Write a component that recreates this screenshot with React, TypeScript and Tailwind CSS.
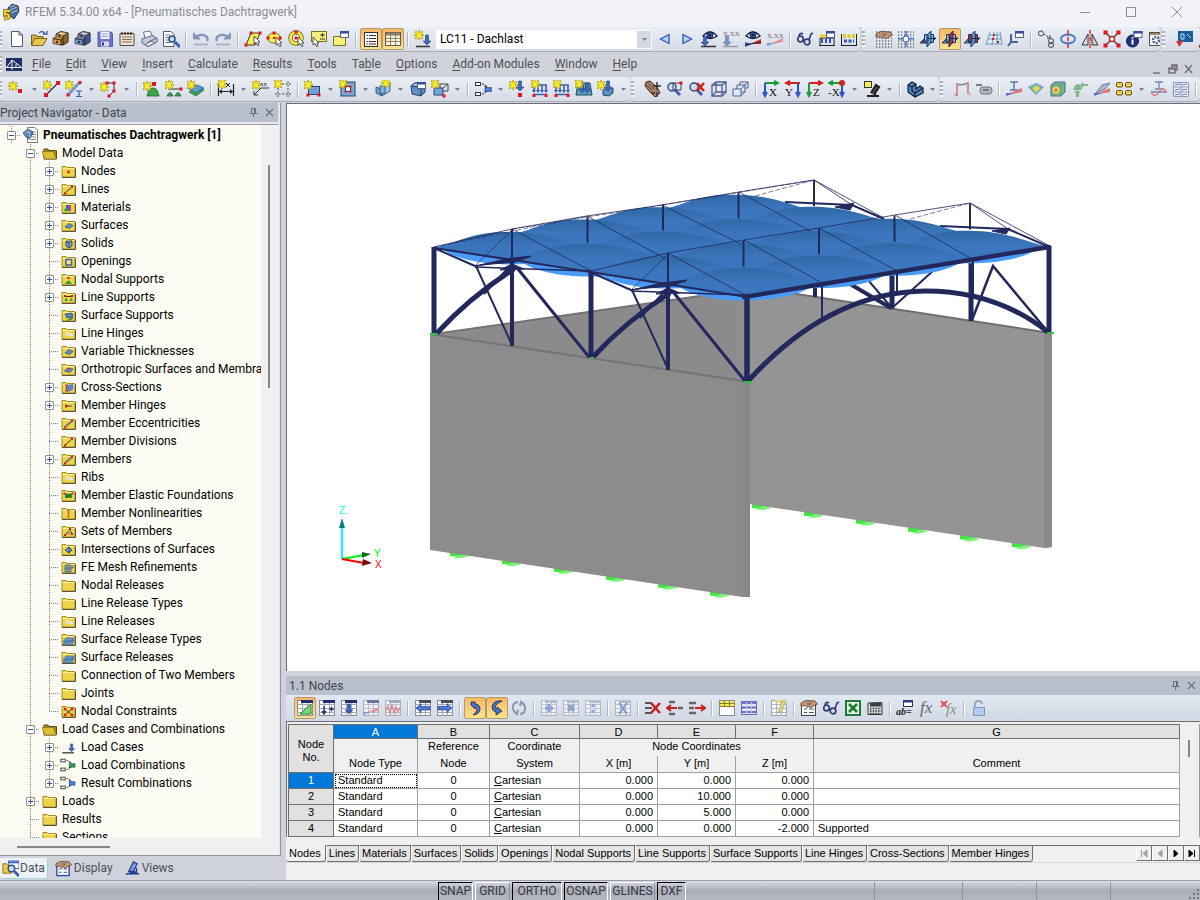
import React from 'react';

const NAVY = '#22285c';

/* ---------- small drawing parts shared by the icons ---------- */

function Star({ x = 4, y = 4 }: { x?: number; y?: number }) {
  return (
    <g transform={`translate(${x} ${y})`} strokeLinecap="round">
      <path d="M0-4V4M-4 0H4M-3-3L3 3M-3 3L3-3" stroke="#a89a18" strokeWidth="2" />
      <path d="M0-3.5V3.5M-3.5 0H3.5M-2.5-2.5L2.5 2.5M-2.5 2.5L2.5-2.5" stroke="#fdf02c" strokeWidth="1.2" />
    </g>
  );
}

function Dot({ x, y, s = 3 }: { x: number; y: number; s?: number }) {
  return <rect x={x - s / 2} y={y - s / 2} width={s} height={s} fill="#e3131f" />;
}

function Cursor({ x, y }: { x: number; y: number }) {
  return <path transform={`translate(${x} ${y})`} d="M0 0V8L2 6.5L3.5 9.5L5 9L3.7 6H6Z" fill="#fff" stroke="#333" strokeWidth=".8" />;
}

function Sheet({ head = '#1f2f70' }: { head?: string }) {
  return (
    <g>
      <rect x="1.5" y="1.5" width="15" height="15" fill="#fff" stroke="#858a96" />
      <path d="M1 5.5H17M1 9.5H17M1 13.5H17M6.5 2V17M11.5 2V17" stroke="#a3a7b2" />
      <rect x="5" y="1" width="12" height="3" fill={head} />
    </g>
  );
}

function Win({ x, y }: { x: number; y: number }) {
  return (
    <g transform={`translate(${x} ${y})`}>
      <rect x=".5" y=".5" width="8" height="6" fill="#fff" stroke="#5b6283" />
      <rect x="0" y="0" width="9" height="2.5" fill="#3c4c9c" />
    </g>
  );
}

function Down({ x, y, c = '#4068b8' }: { x: number; y: number; c?: string }) {
  return <path transform={`translate(${x} ${y})`} d="M-1.5-5H1.5V1H4L0 5L-4 1H-1.5Z" fill={c} stroke="#28437c" strokeWidth=".6" />;
}

function Lens({ x, y, r = 4 }: { x: number; y: number; r?: number }) {
  return (
    <g>
      <path d={`M${x + 3} ${y + 3}L${x + 8} ${y + 8}`} stroke="#3c5fae" strokeWidth="3" />
      <circle cx={x} cy={y} r={r} fill="#c9ddf6" stroke="#324c86" strokeWidth="1.5" />
    </g>
  );
}

function Eye({ x, y }: { x: number; y: number }) {
  return (
    <g transform={`translate(${x} ${y})`}>
      <path d="M-7 1Q0-7 7 1Q0 6-7 1Z" fill="#fff" stroke="#16203f" strokeWidth="1.4" />
      <circle r="3" fill="#35579f" stroke="#10204c" />
      <circle r="1" fill="#05091c" />
    </g>
  );
}

function Drawers({ c, d }: { c: string; d: string }) {
  return (
    <g stroke="#2e2618" strokeWidth=".7">
      <path d="M4 4L9 1.5L16 3V12L11 15L4 13Z" fill={c} />
      <path d="M11 6L16 3V12L11 15Z" fill={d} />
      <path d="M4 4L9 1.500L16 3L11 6Z" fill="#f4ead8" fillOpacity=".5" />
      <path d="M1 8.500L9 10V15L1 13.500ZM1 8.500L4 6.500L11 8L9 10Z" fill={c} />
      <path d="M9 10L11 8V15L9 15Z" fill={d} />
      <circle cx="5" cy="12" r="1" fill="#222" />
      <circle cx="7.500" cy="5.500" r=".8" fill="#222" />
    </g>
  );
}

function Cube({ red = false, mid = false }: { red?: boolean; mid?: boolean }) {
  return (
    <g stroke="#17345e" strokeWidth="1">
      <path d="M1 13L6 8H17L12 13Z" fill={red || mid ? '#8fc1e8' : '#dd2c2c'} />
      <path d="M5.500 4.500H14.500V12.500H5.500Z" fill={mid ? '#d8262b' : '#8fc1e8'} />
      <path d="M8 5L12 1V12L8 17Z" fill={red ? '#d8262b' : '#6ea6d8'} />
      <path d="M3 11H8M8 8.500H17M9 5V12.500" />
    </g>
  );
}

function Loads() {
  return (
    <g>
      <path d="M3 5V12M7 5V12M11 5V12M15 5V12" stroke="#395fb4" strokeWidth="1.6" />
      <path d="M1 10L3 13L5 10ZM5 10L7 13L9 10ZM9 10L11 13L13 10ZM13 10L15 13L17 10Z" fill="#395fb4" />
      <path d="M2 5H16M2 14.5H16" stroke="#395fb4" strokeWidth="1.3" />
      <Dot x={3} y={15.5} />
      <Dot x={15} y={15.5} />
    </g>
  );
}

function Solid() {
  return (
    <g stroke="#1d3557" strokeWidth=".9">
      <path d="M2 6L6 3H16V12L12 16L3 14Z" fill="#5a8ec4" />
      <path d="M2 6L12 7L16 3M12 7V16" fill="none" />
      <path d="M2 6L6 3H16L12 7Z" fill="#a9cdee" />
    </g>
  );
}

function Axes({ a, b, t, m = false }: { a: string; b: string; t: string; m?: boolean }) {
  return (
    <g>
      {m ? (
        <path d="M14 3H2M5 1L1 3L5 5" stroke={a} strokeWidth="2" fill="none" />
      ) : (
        <path d="M3 3H14M12 1L16 3L12 5" stroke={a} strokeWidth="2" fill="none" />
      )}
      <path d={m ? 'M14 3V14M12 12L14 16L16 12' : 'M3 3V14M1 12L3 16L5 12'} stroke={b} strokeWidth="2" fill="none" />
      <text x={m ? 0 : 7} y="16" fontSize="11" fontFamily="Liberation Serif, serif" fill="#111">{t}</text>
    </g>
  );
}

function Comb({ c }: { c: string }) {
  return (
    <g fill="none">
      <rect x="1.5" y="2.5" width="5" height="3" stroke="#333" fill="#fff" />
      <rect x="1.5" y="12.5" width="5" height="3" stroke="#333" fill="#fff" />
      <path d="M8 4Q12 4 12 7M8 14Q12 14 12 11" stroke="#333" strokeDasharray="2 1" />
      <path d="M10 6L12 8L13.5 6ZM10 12L12 10L13.5 12Z" fill="#333" />
      <path d="M11 7.5H17.5V11.5H11Z" fill={c} stroke="#24415c" strokeWidth=".6" />
    </g>
  );
}

function Specs() {
  return (
    <g fill="none" stroke="#2d3f74" strokeWidth="1.7">
      <circle cx="4.5" cy="9" r="2.8" />
      <circle cx="11" cy="12" r="2.8" />
      <path d="M7 9.5L9 10.5M3 6Q4 2 7 4M13 10L15 4L17 3" />
    </g>
  );
}

function Diagram() {
  return (
    <g>
      <path d="M1 15L17 8V12Z" fill="#e27070" />
      <path d="M1 16V13L9 13Z" fill="#5170c4" />
    </g>
  );
}

const Hand = () => (
  <g>
    <path d="M1 4L6 1.500L15 2L17.500 5L13 7L11 9L9 7.500L7 8.500L5.500 6.500L1 7Z" fill="#c49a78" stroke="#4e3728" strokeWidth=".8" />
    <path d="M6 4H12M7 6L11 5" stroke="#7a5a42" strokeWidth=".8" />
  </g>
);

const Grid = () => (
  <path d="M1 2H17M1 5H17M1 8H17M1 11H17M1 14H17M1 17H17" stroke="#333" strokeWidth="1.2" strokeDasharray="1.3 1.7" />
);

/* ---------- toolbar icons, 18 x 18 ---------- */

const ICONS: Record<string, React.ReactNode> = {
  New: <path d="M3.500 1.500H11L14.500 5V16.500H3.500ZM11 1.500V5H14.500" fill="#fff" stroke="#555b68" />,
  Open: (
    <g stroke="#6e5710" strokeWidth=".9">
      <path d="M1.500 15V5H6L7 6.500H13V9" fill="#d9b53a" />
      <path d="M1.500 15.500L4.500 8.500H17L13 15.500Z" fill="#e6c64a" />
      <path d="M9 3Q13 0 15 4M13 4H17V1" fill="none" stroke="#3c5c9c" strokeWidth="1.300" />
    </g>
  ),
  'Open block': <Drawers c="#dca653" d="#8d6426" />,
  'Save block': <Drawers c="#7d9ae0" d="#3c56a4" />,
  Save: (
    <g>
      <path d="M2 2H15L16.500 3.500V16.500H2Z" fill="#6b72c8" stroke="#454c90" strokeWidth=".8" />
      <rect x="4.500" y="2" width="9" height="7" fill="#eef1fb" />
      <path d="M6 4H12M6 6.500H12" stroke="#9aa2c8" />
      <rect x="5" y="11.500" width="8" height="5" fill="#d5d9e6" />
      <rect x="6" y="12.500" width="2" height="3" fill="#30387c" />
    </g>
  ),
  Report: (
    <g>
      <path d="M2 3.500H16V15.500H2Z" fill="#f6e2cd" stroke="#4f4a47" />
      <path d="M4 7H14M4 9.500H14M4 12H14" stroke="#7b6d61" />
      <path d="M3 3.500H15" stroke="#444" strokeWidth="2.500" strokeDasharray="2 1" />
    </g>
  ),
  Print: (
    <g stroke="#474c60" strokeWidth=".8">
      <path d="M5 8L3.500 2L10 1L13 7" fill="#fff" />
      <path d="M2 9L12 5.500L17 8V12L8 16.500L2 13Z" fill="#c3c8dc" />
      <path d="M8 12L16 8.500M5 14.500L12 11L14.500 13L8 16.500Z" fill="#f4f6ff" />
    </g>
  ),
  'Print preview': (
    <g>
      <path d="M1.500 1.500H9L12 4.500V16.500H1.500Z" fill="#fff" stroke="#555b68" />
      <path d="M3.500 5H8M3.500 7.500H7M3.500 10H7M3.500 12.500H8" stroke="#777" />
      <Lens x={10} y={9} r={3} />
    </g>
  ),
  Undo: (
    <g fill="none" stroke="#8496b8">
      <path d="M3 8Q9 2 15 7Q16 9 15 11" strokeWidth="2.500" />
      <path d="M1.500 3V9H8Z" fill="#8496b8" />
      <path d="M2 14.500H16" strokeWidth="2" stroke="#aab4c6" />
    </g>
  ),
  Redo: (
    <g fill="none" stroke="#8496b8">
      <path d="M15 8Q9 2 3 7Q2 9 3 11" strokeWidth="2.500" />
      <path d="M16.500 3V9H10Z" fill="#8496b8" />
      <path d="M2 14.500H16" strokeWidth="2" stroke="#aab4c6" />
    </g>
  ),
  'Select rhomboid': (
    <g>
      <path d="M2 15L7 3H16L11 15Z" fill="#f8ee50" stroke="#333" />
      <Dot x={2} y={15} /><Dot x={7} y={3} /><Dot x={16} y={3} />
      <Cursor x={10} y={6} />
    </g>
  ),
  'Select ellipse': (
    <g>
      <ellipse cx="8" cy="8" rx="6.500" ry="5" fill="#f8ee50" stroke="#7b7020" />
      <Dot x={2} y={8} /><Dot x={14} y={8} /><Dot x={8} y={3} /><Dot x={8} y={8} s={2} />
      <Cursor x={10} y={7} />
    </g>
  ),
  'Select annulus': (
    <g>
      <circle cx="8" cy="8" r="5.500" fill="#fff" stroke="#6b6120" strokeWidth="4.500" />
      <circle cx="8" cy="8" r="5.500" fill="none" stroke="#f5e63e" strokeWidth="3" />
      <Dot x={8} y={8} /><Dot x={8} y={2} />
      <Cursor x={10} y={7} />
    </g>
  ),
  'Select special': (
    <g>
      <rect x="1.500" y="1.500" width="15" height="10" fill="#f8ee7a" stroke="#7b7020" />
      <path d="M10 5H15M12.500 3V7M10 9H15" stroke="#333" />
      <Cursor x={3} y={7} />
    </g>
  ),
  'New selection': (
    <g>
      <path d="M1.500 6.500H13.500V15.500H1.500Z" fill="#f8ee7a" stroke="#7b7020" />
      <Win x={8} y={1} />
    </g>
  ),
  Navigator: (
    <g>
      <rect x="2.500" y="2.500" width="13" height="14" fill="#fff" stroke="#333" />
      <path d="M4.500 5.500H6M7 5.500H14M4.500 8.500H6M7 8.500H14M4.500 11.500H6M7 11.500H14M4.500 14H6M7 14H14" stroke="#333" />
    </g>
  ),
  Tables: (
    <g>
      <rect x="1.500" y="2.500" width="15" height="13" fill="#fdf3df" stroke="#5e594d" />
      <path d="M2 4H16" stroke="#8c7f66" strokeWidth="3" />
      <path d="M2 8.500H16M2 11.500H16M6.500 3V15M11.500 3V15" stroke="#8c8270" />
    </g>
  ),
  'New load case': (
    <g>
      <Star x={5} y={5} />
      <path d="M2 16.500H16" stroke="#333" strokeWidth="1.500" />
      <Down x={13} y={10} />
    </g>
  ),
  Previous: <path d="M13 4.500V13.500L4.500 9Z" fill="#b5d4fb" stroke="#2e56b8" strokeWidth="1.300" />,
  Next: <path d="M5 4.500V13.500L13.500 9Z" fill="#b5d4fb" stroke="#2e56b8" strokeWidth="1.300" />,
  'Show loads': <g><Eye x={10} y={5} /><Down x={5} y={11} /><path d="M1 16.500H16" stroke="#333" strokeWidth="1.500" /></g>,
  'Show load values': (
    <g opacity=".65">
      <text x="1" y="6" fontSize="7" fontFamily="Liberation Serif, serif" fill="#222">X.XX</text>
      <Down x={5} y={11} /><path d="M1 16.500H16" stroke="#777" strokeWidth="1.500" />
    </g>
  ),
  'Show results': <g><Eye x={9} y={5} /><path d="M1 17V12L8 14Z" fill="#3a58c0" /><path d="M17 9V14H6Z" fill="#dc2c30" /><path d="M1 15L17 12" stroke="#222" /></g>,
  'Show result values': (
    <g opacity=".65">
      <text x="1" y="8" fontSize="7" fontFamily="Liberation Serif, serif" fill="#222">X.XX</text>
      <Diagram />
    </g>
  ),
  Glasses: <Specs />,
  'Number dialog': <g><path d="M2 8V15M16 8V15M2 8H16M1 15.500H17" stroke="#222" fill="none" /><path d="M4 8V13M8 8V13M12 8V13" stroke="#3858b8" strokeWidth="2" /><path d="M2 6H8" stroke="#e6cf31" strokeWidth="3" /><Win x={8} y={1} /></g>,
  Numbering: <g><path d="M1.500 4V16M16.500 4V16M1 15.500H17" stroke="#222" /><path d="M3 6H15" stroke="#e0c830" strokeWidth="4" strokeDasharray="3 1.500" /><path d="M4 11H14" stroke="#3858b8" strokeWidth="3" strokeDasharray="3 1.500" /></g>,
  'Grid settings': <g><Grid /><Hand /></g>,
  Snap: <g><Grid /><path d="M9 1V17M1 9H17" stroke="#2f55c0" strokeWidth="1.200" /><circle cx="9" cy="9" r="3" fill="#fff" stroke="#2f55c0" /></g>,
  'Work plane XY': <Cube />,
  'Work plane YZ': <Cube red />,
  'Work plane XZ': <Cube mid />,
  Mesh: <g><path d="M5 2H15L17 15H1Z" fill="#dcebf7" /><path d="M5 2L1 15M9 2L7 15M12 2V15M15 2L17 15M4 5H16M3 9H17M1 14H17" stroke="#6f99bf" /><Dot x={9} y={5} s={2} /><Dot x={8} y={9} s={2} /><Dot x={13} y={12} s={2} /></g>,
  'Coordinate system': <g><path d="M4 4V12H11M4 12L1 16" stroke="#4660a8" strokeWidth="2" fill="none" /><Win x={8} y={1} /></g>,
  Move: <g fill="none" stroke="#444"><circle cx="4" cy="3.500" r="2.500" /><circle cx="14" cy="11" r="2.500" /><circle cx="14" cy="15" r="2.500" /><path d="M7 4L13 8" strokeDasharray="2 1" /><path d="M10 8H13V5" /></g>,
  Rotate: <g fill="none"><ellipse cx="9" cy="9" rx="7" ry="4.500" stroke="#4d82c4" strokeWidth="2" /><path d="M9 0V18" stroke="#d42020" strokeWidth="1.400" strokeDasharray="4 1 1 1" /></g>,
  Mirror: <g fill="none" stroke="#333"><path d="M7 4V15H1Z" /><path d="M11 4V15H17Z" fill="#ccc" /><path d="M9 0V18" stroke="#d42020" strokeWidth="1.400" strokeDasharray="4 1 1 1" /></g>,
  Divide: <g><path d="M2 2L16 16M16 2L2 16" stroke="#333" strokeWidth="1.200" /><circle cx="9" cy="9" r="2.500" fill="#fff" stroke="#d42020" strokeWidth="1.400" /><Dot x={2.500} y={2.500} s={4} /><Dot x={15.500} y={2.500} s={4} /><Dot x={2.500} y={15.500} s={4} /><Dot x={15.500} y={15.500} s={4} /></g>,
  Info: <g><circle cx="7.500" cy="11" r="6" fill="#20307e" stroke="#101a4a" /><path d="M7.500 7V8.500M7.500 9.500V14.500" stroke="#fff" strokeWidth="2" /><Win x={8.500} y={1} /></g>,
  Settings: <g><rect x="2.500" y="2.500" width="14" height="13" fill="#fff" stroke="#4b4f58" /><path d="M3 4H16" stroke="#a08c58" strokeWidth="2" /><circle cx="9" cy="10" r="3" fill="none" stroke="#4a5f96" strokeWidth="2.500" strokeDasharray="2 1" /></g>,
  Background: <g><rect x="3" y="1" width="15" height="11" fill="#1c5c9c" /><path d="M6 4H9V9H6ZM12 4L16 8" stroke="#b5e2f5" fill="none" /><path d="M1 11H8L4.500 17Z" fill="#dc2c30" /></g>,
  Warning: <path d="M2 17L10 2L18 17Z" fill="#e04747" stroke="#8a1414" />,

  Node: <g><Star x={5} y={6} /><Dot x={12} y={11} s={4} /></g>,
  Line: <g><Star x={4} y={5} /><path d="M3 15L15 3" stroke="#333" strokeWidth="1.300" /><Dot x={3} y={15} s={4} /><Dot x={15} y={3} s={4} /></g>,
  Member: <g><path d="M3 15L14 3" stroke="#6f9dd0" strokeWidth="3" /><Star x={4} y={5} /><Dot x={3} y={15} s={3} /><Dot x={15} y={2.500} s={3} /><path d="M11 11H17M11 16.500H17M14 11V16" stroke="#3858a8" strokeWidth="1.200" /></g>,
  Polyline: <g><path d="M6 3H14V11L9 16" fill="none" stroke="#333" /><Star x={4} y={7} /><Dot x={7} y={3} /><Dot x={14} y={3} /><Dot x={14} y={11} /><Dot x={9} y={16} /></g>,
  'Nodal support': <g><path d="M5 13Q6 8 10 8Q14 8 15 13L16 16H4Z" fill="#3fa84c" stroke="#1c5c26" strokeWidth=".8" /><Star x={4} y={6} /><Dot x={11} y={4} s={4} /></g>,
  'Line support': <g><path d="M3 9H16" stroke="#333" /><path d="M2 16Q5 9 8 16ZM10 16Q13 9 16 16Z" fill="#3fa84c" stroke="#1c5c26" strokeWidth=".8" /><Star x={4} y={5} /><Dot x={16} y={9} /></g>,
  'Surface support': <g><path d="M2 12L10 7L17 10L9 16Z" fill="#3fa84c" stroke="#1c5c26" strokeWidth=".7" /><path d="M2 9L10 5L17 8L9 13Z" fill="#5c9bdb" stroke="#274a78" strokeWidth=".7" /><Star x={4} y={5} /></g>,
  Dimension: <g><path d="M1.500 4V16M16.500 4V16M2 11.500H16" stroke="#222" strokeWidth="1.200" /><path d="M2 11.500L5 9V14ZM16 11.500L13 9V14Z" fill="#222" /><Star x={5} y={4} /><path d="M9 3L13 7M13 3L9 7" stroke="#222" /></g>,
  Comment: <g><text x="8" y="6" fontSize="7" fontFamily="Liberation Serif, serif" fill="#222">xx</text><path d="M17 8H9L2 15M2 11V15H6" stroke="#333" fill="none" /><Star x={4} y={5} /></g>,
  'Guide line': <g><path d="M4 1V17M14 1V17M1 4H18M1 14H18" stroke="#444" strokeDasharray="2 1.500" /><Star x={4} y={4} /></g>,
  Surface: <g><rect x="4.500" y="6.500" width="11" height="8" fill="#6fa0d8" stroke="#27456c" /><Star x={4} y={5} /><Dot x={4} y={15} /><Dot x={15} y={15} /></g>,
  Opening: <g><rect x="2" y="2" width="14" height="14" fill="#7fa7d0" stroke="#27456c" /><rect x="6.500" y="6.500" width="5" height="5" fill="#f0f3fa" stroke="#27456c" /><Star x={4} y={4} /><Dot x={6.500} y={6.500} s={2} /><Dot x={11.500} y={6.500} s={2} /><Dot x={6.500} y={11.500} s={2} /><Dot x={11.500} y={11.500} s={2} /></g>,
  Intersection: <g stroke="#27456c" strokeWidth=".8"><path d="M2 7L8 9V16L2 13Z" fill="#6fa0d8" /><path d="M8 9L16 3V11L8 16Z" fill="#9cc3ea" /><path d="M6 6L11 5V13L6 14Z" fill="#7fb0e0" /><Star x={12} y={3} /></g>,
  'Solid dialog': <g><Solid /><Win x={8} y={2} /></g>,
  'New solid': <g><path d="M3 8H12V15H3Z" fill="#74a5da" stroke="#27456c" /><path d="M9 4H17V11H12M9 4V8M12 8L17 4" stroke="#444" fill="none" /><Star x={4} y={4} /><Dot x={13} y={16} /></g>,
  Combination: <Comb c="#3f7fe0" />,
  'Nodal load': <g><Star x={4} y={5} /><Down x={11} y={6} /><Dot x={11} y={15} s={4} /></g>,
  'Member load': <g><Loads /><Star x={4} y={4} /></g>,
  'Line load': <g><Loads /><Star x={4} y={4} /></g>,
  'Surface load': <g><path d="M3 3H15L17 15H1Z" fill="#5d9fc0" stroke="#1c4a62" /><Down x={7} y={8} /><Down x={12} y={8} /><Star x={4} y={4} /></g>,
  'Solid load': <g><path d="M6 10L10 8H16V13L12 16L6 15Z" fill="#5a8ec4" stroke="#1d3557" strokeWidth=".9" /><Star x={4} y={5} /><Down x={11} y={6} /></g>,
  Pan: <g><path d="M2 2L6 1L13 7L16 13L11 17L5 11L1 6Z" fill="#a88266" stroke="#3c2c22" /><path d="M2 5L8 10M4 3L10 9" stroke="#5c4232" /><path d="M13 2V10M9 6H17M13 12V17M7 13H11" stroke="#333" strokeWidth="1.500" /></g>,
  'Zoom window': <g><Lens x={6} y={7} /><path d="M7 3H15V10H7Z" fill="none" stroke="#444" /><Dot x={15} y={3} /></g>,
  'Zoom cancel': <g><Lens x={6} y={7} /><path d="M9 3L16 11M16 3L9 11" stroke="#d02020" strokeWidth="2.500" /></g>,
  Isometric: <g fill="none" stroke="#4f5f94" strokeWidth="1.300"><path d="M2 5H12V16H2ZM6 2H16V12H6ZM2 5L6 2M12 5L16 2M12 16L16 12M2 16L6 12" /></g>,
  'View layers': <g fill="#dfe8f6" stroke="#4f5f94"><path d="M8 2H16V8H8Z" /><path d="M5 5H13V12H5Z" /><path d="M1 9H9V16H1ZM9 9L16 2M9 16L13 12" /></g>,
  'View X': <Axes a="#16a036" b="#2c55cc" t="X" />,
  'View Y': <g><path d="M16 3H3M6 1L2 3L6 5" stroke="#d62020" strokeWidth="2" fill="none" /><path d="M14 3V14M12 12L14 16L16 12" stroke="#2c55cc" strokeWidth="2" fill="none" /><text x="1" y="16" fontSize="11" fontFamily="Liberation Serif, serif" fill="#111">Y</text></g>,
  'View Z': <Axes a="#d62020" b="#16a036" t="Z" />,
  'View -X': <g><Axes a="#16a036" b="#2c55cc" t="-X" m /><circle cx="14" cy="3" r="3" fill="#d62020" /></g>,
  'User view': <g><path d="M4 16H16M8 13L13 5L16 7L12 13V16" stroke="#222" strokeWidth="2.200" fill="#555" /><rect x="1.500" y="1.500" width="7" height="6" fill="#fbee4e" stroke="#333" /></g>,
  Render: <g stroke="#0f1f33" strokeWidth="1.200"><path d="M2 5L6 2L10 4V9L14 6L17 8V13L9 17L2 12Z" fill="#4f83bb" /><path d="M2 5L6 7V11L9 13L17 8M9 13V17M6 7L10 4" fill="none" /></g>,
  'Member results': <g fill="none"><path d="M4 16V4Q9 6 15 3V14" stroke="#888" strokeWidth="1.500" /><path d="M2 16Q6 8 4 4M15 3Q13 9 17 15" stroke="#e29090" strokeWidth="1.400" /></g>,
  Tag: <g><rect x="5" y="7" width="12" height="7" rx="3" fill="#b4b6bf" stroke="#70737f" /><path d="M1 5H7M8 10H14" stroke="#777a85" strokeWidth="2" /></g>,
  'Section results': <g><path d="M5 2H13M9 2V10M5 10H13" stroke="#5d7ba8" strokeWidth="1.500" /><Diagram /></g>,
  'Surface results': <g><path d="M1 7L9 3L17 7L9 15Z" fill="#7f8fe0" /><path d="M3 7L9 4L15 8L9 14Z" fill="#78cc74" /><path d="M6 8L10 6L13 8L9 12Z" fill="#f3d656" /></g>,
  'Solid results': <g><path d="M2 5L6 2H16V12L12 16H2Z" fill="#74b97a" stroke="#476c8c" /><path d="M2 5H12V16M12 5L16 2" stroke="#6a8fc8" /><circle cx="7" cy="10" r="3.500" fill="#f3d656" /><circle cx="7" cy="10" r="1.600" fill="#e06060" /></g>,
  'Support reactions': <g fill="#7fb88a"><path d="M2 10Q4 4 7 4Q10 4 11 10Z" /><path d="M12 4H17V6H12V8L9 5L12 2Z" /><path d="M5 17V13H3L6.500 10L10 13H8V17Z" /></g>,
  'Line results': <g><path d="M3 13L9 5L17 3L12 9Z" fill="#a8b8cf" stroke="#6d7c96" /><Diagram /></g>,
  'Result windows': <g fill="#f4d34c" stroke="#5c4d16"><rect x="1.500" y="2.500" width="6" height="4.500" rx="1" /><rect x="10.500" y="2.500" width="6" height="4.500" rx="1" /><rect x="1.500" y="10.500" width="6" height="4.500" rx="1" /><rect x="10.500" y="10.500" width="6" height="4.500" rx="1" /></g>,
  'Result diagram': <g><path d="M5 2H13M9 2V9M5 9H13M1 12H17" stroke="#7088b0" strokeWidth="1.300" /><path d="M1 12Q5 19 9 12Q13 5 17 13" fill="none" stroke="#e07878" strokeWidth="1.300" /></g>,
  'Result sections': <g><path d="M1.500 2.500H16.500V16.500H1.500ZM9 2V17M2 7H16M2 12H16" fill="#edf1f8" stroke="#8d9bb8" /><path d="M3 5L8 4M10 5L15 4M3 10L8 9M10 10L15 9M3 15L8 14M10 15L15 14" stroke="#6a7ec0" /></g>,

  'Edit graphic': <g><Sheet /><path d="M4 15L15 5V15Z" fill="#7cd67a" stroke="#1e8a2c" /></g>,
  'Insert row': <g><Sheet /><path d="M6 7V14M4 12L6 15L8 12M11 10H16M13.500 7.500V12.500" stroke="#26397c" strokeWidth="1.500" fill="none" /></g>,
  'Move down': <g><Sheet /><Down x={9} y={10} c="#3a62be" /></g>,
  'Table diagram': <g opacity=".6"><Sheet /><Diagram /></g>,
  'Table curve': <g opacity=".6"><Sheet head="#7780b0" /><path d="M2 12L4 7L6 14L8 6L10 14L12 8L14 13L16 8" fill="none" stroke="#dd4c4c" strokeWidth="1.300" /></g>,
  'Table left': <g><Sheet head="#4a4e5c" /><path d="M2 9L7 5V7.500H16V11H7V13.500Z" fill="#4c79d8" stroke="#213e86" strokeWidth=".7" /></g>,
  'Table right': <g><Sheet head="#4a4e5c" /><path d="M16 9L11 5V7.500H2V11H11V13.500Z" fill="#4c79d8" stroke="#213e86" strokeWidth=".7" /></g>,
  'Sync selection': <path d="M5 3H9V5Q14 5 14 10Q14 15 7 16Q11 13 11 10Q10 8 9 8V10L5 6Z" fill="#4d74c4" stroke="#18305c" strokeWidth=".9" />,
  'Sync view': <path d="M14 2Q5 1 4 8Q4 12 8 13V16L14 12L9 8V10Q7 10 7 8Q8 4 14 2Z" fill="#4d74c4" stroke="#18305c" strokeWidth=".9" />,
  Refresh: <g fill="none" stroke="#8c97b4" strokeWidth="2"><path d="M8 3Q2 4 3 9Q3 13 7 15M10 15Q16 14 15 9Q15 5 11 3" /><path d="M4 12L7 15L8 11M14 6L11 3L10 7" /></g>,
  'Add row': <g opacity=".5"><Sheet head="#9098b0" /><path d="M9 5V13M5 9H13" stroke="#3f62b8" strokeWidth="3" /></g>,
  'Multiply row': <g opacity=".5"><Sheet head="#9098b0" /><path d="M6 6L12 12M12 6L6 12" stroke="#3f62b8" strokeWidth="3" /></g>,
  'Divide row': <g opacity=".5"><Sheet head="#9098b0" /><path d="M7.500 5H10.500V8H7.500ZM7.500 11H10.500V14H7.500Z" fill="#3f62b8" /></g>,
  'Clear table': <g opacity=".55"><Sheet head="#9098b0" /><path d="M5 4L13 15M13 4L5 15" stroke="#3f62b8" strokeWidth="2" /></g>,
  'Delete row': <g><path d="M1 4H8M1 9H8M1 14H8" stroke="#555" strokeWidth="2" /><path d="M7 4L16 14M16 4L7 14" stroke="#cc1d1d" strokeWidth="2.500" /></g>,
  'Row left': <g><path d="M3 3H9M3 15H9M12 9H17" stroke="#666" strokeWidth="2.500" /><path d="M11 9H2M5 6L1 9L5 12" stroke="#cc1d1d" strokeWidth="2" fill="none" /></g>,
  'Row right': <g><path d="M1 4H8M1 9H6M1 14H8" stroke="#666" strokeWidth="2.500" /><path d="M7 9H16M13 6L17 9L13 12" stroke="#cc1d1d" strokeWidth="2" fill="none" /></g>,
  'Table header': <g><rect x="1.500" y="1.500" width="15" height="15" fill="#fff" stroke="#8c8c94" /><path d="M2 2H16V7H2Z" fill="#f2e95c" /><path d="M2 4.500H16M6.500 2V7M11.500 2V7M2 7.500H16" stroke="#8a7f22" /></g>,
  'Table rows': <g><rect x="1.500" y="2.500" width="15" height="13" fill="#fff" stroke="#6b6fb4" /><path d="M2 4H16M2 8.500H16M2 13H16" stroke="#7377cc" strokeWidth="2.500" /><path d="M6.500 3V15M11.500 3V15" stroke="#c5c7ea" /></g>,
  'Table info': <g opacity=".75"><Sheet head="#d8d078" /><path d="M12 2L15 3L12 12L8 14L10 9Z" fill="#f2e04a" stroke="#8a7f22" strokeWidth=".7" /></g>,
  Properties: <g><rect x="1.500" y="5.500" width="14" height="11" fill="#fff" stroke="#444" /><path d="M4 10H7M9 10H14M4 13.500H7M9 13.500H14" stroke="#555" /><Hand /></g>,
  Excel: <g><rect x="2" y="2" width="14" height="14" fill="#e2f4e4" stroke="#1f7a34" strokeWidth="2" /><path d="M5 5L13 13M13 5L5 13" stroke="#1f7a34" strokeWidth="2.600" /></g>,
  Calculator: <g><path d="M2 4L16 3.500V15.500H2Z" fill="#d9dbe0" stroke="#333" /><rect x="4" y="4" width="11" height="3.500" fill="#3b4048" /><path d="M4 9.500H15M4 12H15M4 14.500H15" stroke="#333" strokeWidth="1.500" strokeDasharray="1.500 1.200" /></g>,
  Variables: <g><text x="0" y="16" fontSize="10" fontStyle="italic" fontWeight="bold" fontFamily="Liberation Serif, serif" fill="#222">ab=</text><rect x="7.500" y="1.500" width="9" height="6" fill="#fff" stroke="#333" /><path d="M7 2.500H17" stroke="#27408c" strokeWidth="2" /></g>,
  Formula: <text x="2" y="14" fontSize="17" fontStyle="italic" fontFamily="Liberation Serif, serif" fill="#666">fx</text>,
  'Delete formula': <g><text x="6" y="15" fontSize="14" fontStyle="italic" fontFamily="Liberation Serif, serif" fill="#888">fx</text><path d="M1 2L7 8M7 2L1 8" stroke="#dc5050" strokeWidth="1.800" /></g>,
  Lock: <g><path d="M5 9V5Q5 2 8.500 2Q12 2 12 5" fill="none" stroke="#9aa3b5" strokeWidth="1.800" /><rect x="3.500" y="8.500" width="11" height="8" fill="#b3cbef" stroke="#8297bd" /></g>,
};

/* ---------- toolbars ---------- */

function Tool({ name, active = false }: { name: string; active?: boolean }) {
  return (
    <button
      type="button"
      aria-label={name}
      className={
        'flex h-[22px] w-[22px] shrink-0 items-center justify-center rounded-xs border ' +
        (active ? 'border-[#b09a70] bg-gradient-to-b from-[#fbb766] to-[#fee28c]' : 'border-transparent')
      }
    >
      <svg width="18" height="18" viewBox="0 0 18 18" className="shrink-0" fill="none">
        {ICONS[name]}
      </svg>
    </button>
  );
}

function Grip() {
  return <div className="mr-2 h-4 w-[3px] shrink-0 bg-[repeating-linear-gradient(180deg,#a9afba_0_2px,#f7f8fb_2px_4px)]" />;
}

function Split({ name }: { name: string }) {
  return (
    <div className="flex w-[35px] shrink-0 items-center">
      <Tool name={name} />
      <button type="button" aria-label={name + ' options'} className="flex h-[22px] flex-1 items-center justify-center">
        <svg width="5" height="3" viewBox="0 0 5 3"><path d="M0 0H5L2.500 3Z" fill="#7b808a" /></svg>
      </button>
    </div>
  );
}

/* "|" is a divider, "*" marks a pressed button, "+" a button with a drop-down arrow */
function Tools({ items }: { items: string[] }) {
  return (
    <>
      {items.map((item, i) => {
        if (item === '|') {
          return (
            <div key={i} className="flex w-2 shrink-0 justify-center">
              <div className="h-[15px] w-0.5 border-r border-white bg-[#b3b8c2]" />
            </div>
          );
        }
        if (item.startsWith('+')) return <Split key={i} name={item.slice(1)} />;
        if (item.startsWith('*')) return <Tool key={i} name={item.slice(1)} active />;
        return <Tool key={i} name={item} />;
      })}
    </>
  );
}

function Strip({ className, children }: { className: string; children: React.ReactNode }) {
  return (
    <div
      className={
        'flex h-[25px] items-center overflow-hidden rounded-r-sm border-b border-[#a9adb8] bg-gradient-to-b from-[#eaeef7] to-[#d6dbe5] ' +
        className
      }
    >
      {children}
    </div>
  );
}

const MENU = ['File', 'Edit', 'View', 'Insert', 'Calculate', 'Results', 'Tools', 'Table', 'Options', 'Add-on Modules', 'Window', 'Help'];

function MenuText({ label }: { label: string }) {
  const at = label === 'Table' ? 2 : 0;
  return (
    <>
      {label.slice(0, at)}
      <span className="underline underline-offset-2">{label[at]}</span>
      {label.slice(at + 1)}
    </>
  );
}

function Chrome() {
  return (
    <header className="shrink-0">
      <div className="flex h-[27px] items-center bg-[#f1f3f8] pb-1 text-[12px] text-[#8a8c91]">
        <svg width="18" height="18" viewBox="0 0 18 18" className="mr-[5px] ml-[2px]">
          <path d="M6 5L10 1L16 3L17 8L12 16L8 13Z" fill="#4d6d9e" stroke="#26395c" />
          <path d="M8 4L13 2M8 7L15 4M9 10L16 7" stroke="#a9bedc" />
          <path d="M8 8H3V11.500Q7 10.500 7 13.500Q7 16 2 15.500" fill="none" stroke="#6b5208" strokeWidth="3.500" />
          <path d="M8 8H3V11.500Q7 10.500 7 13.500Q7 16 2 15.500" fill="none" stroke="#f5d22c" strokeWidth="2" />
        </svg>
        <span className="flex-1">RFEM 5.34.00 x64 - [Pneumatisches Dachtragwerk]</span>
        {[
          ['Minimize', 'M0 5.500H10'],
          ['Maximize', 'M.5 .5H9.500V9.500H.5Z'],
          ['Close', 'M0 0L10 10M10 0L0 10'],
        ].map(([name, d]) => (
          <button key={name} type="button" aria-label={name} className="flex h-5 w-[46px] items-center justify-center">
            <svg width="10" height="10" viewBox="0 0 10 10"><path d={d} fill="none" stroke="#8c8e92" /></svg>
          </button>
        ))}
      </div>

      <div className="flex gap-0.5 bg-[#d0d3dc]">
        <Strip className="w-[860px] shrink-0">
          <div className="mr-1 h-4 w-0.5 shrink-0 bg-[repeating-linear-gradient(180deg,#a9afba_0_2px,#f7f8fb_2px_4px)]" />
          <Tools items={['New', 'Open', 'Open block', 'Save block', 'Save', 'Report', 'Print', 'Print preview', '|', 'Undo', 'Redo', '|', 'Select rhomboid', 'Select ellipse', 'Select annulus', 'Select special', 'New selection', '|', '*Navigator', '*Tables', '|', 'New load case']} />
          <div className="mr-0.5 ml-0.5 flex h-[19px] w-[216px] shrink-0 items-center bg-white p-px">
            <select aria-label="Load case" className="h-full flex-1 appearance-none bg-transparent pl-[3px] text-[12px] leading-4 text-black outline-none">
              <option>LC11 - Dachlast</option>
            </select>
            <div className="pointer-events-none flex h-full w-3.5 items-center justify-center bg-[#d5d9e2]">
              <svg width="5" height="3" viewBox="0 0 5 3"><path d="M0 0H5L2.500 3Z" fill="#7b808a" /></svg>
            </div>
          </div>
          <Tools items={['Previous', 'Next', 'Show loads', 'Show load values', 'Show results', 'Show result values', '|', 'Glasses', 'Number dialog', 'Numbering']} />
        </Strip>
        <Strip className="min-w-0 flex-1">
          <Grip />
          <Tools items={['Grid settings', 'Snap', 'Work plane XY', '*Work plane YZ', 'Work plane XZ', 'Mesh', 'Coordinate system', '|', 'Move', 'Rotate', 'Mirror', 'Divide', 'Info', 'Settings']} />
        </Strip>
        <Strip className="w-[38px] shrink-0">
          <Grip />
          <Tools items={['Background', 'Warning']} />
        </Strip>
      </div>

      <nav className="flex h-[25px] items-center bg-[#d0d3da] pb-px text-[12px] text-[#4c5058]">
        <div className="h-4 w-0.5 bg-[repeating-linear-gradient(180deg,#a9afba_0_2px,#f7f8fb_2px_4px)]" />
        <svg width="16" height="13" viewBox="0 0 16 13" className="mr-[3px] ml-1">
          <rect width="16" height="13" fill="#1f2d69" />
          <path d="M0 9.500H16M6 2V12M6 2L1 9M6 2L15 9M10 6V9" stroke="#fff" fill="none" />
        </svg>
        {MENU.map((m) => (
          <button key={m} type="button" className="mr-px px-[7px] leading-4 whitespace-nowrap">
            <MenuText label={m} />
          </button>
        ))}
        <div className="flex flex-1 justify-end gap-1 self-end pr-1 pb-0.5">
          {[
            ['Minimize window', 'M1 9H8'],
            ['Restore window', 'M3 1H9V6H7M1 4H7V9H1ZM3 2H9M1 5H7'],
            ['Close window', 'M1 1L8 9M8 1L1 9'],
          ].map(([name, d]) => (
            <button key={name} type="button" aria-label={name}>
              <svg width="12" height="10" viewBox="0 0 12 10"><path d={d} fill="none" stroke="#6f7276" strokeWidth="1.500" /></svg>
            </button>
          ))}
        </div>
      </nav>

      <div className="flex gap-px bg-[#d0d3dc]">
        <Strip className="w-[630px] shrink-0">
          <div className="mr-1 h-4 w-0.5 shrink-0 bg-[repeating-linear-gradient(180deg,#a9afba_0_2px,#f7f8fb_2px_4px)]" />
          <Tools items={['+Node', 'Line', '+Member', '+Polyline', '|', 'Nodal support', 'Line support', 'Surface support', '|', '+Dimension', 'Comment', 'Guide line', '|', '+Surface', '+Opening', '+Intersection', 'Solid dialog', '+New solid', '|', '+Combination', 'Nodal load', 'Member load', 'Line load', 'Surface load', '+Solid load']} />
        </Strip>
        <Strip className="shrink-0">
          <Grip />
          <Tools items={['Pan', 'Zoom window', 'Zoom cancel', 'Isometric', 'View layers', '|', 'View X', 'View Y', 'View Z', '+View -X', '+User view', '|', '+Render']} />
        </Strip>
        <Strip className="min-w-0 flex-1">
          <Grip />
          <Tools items={['Member results', 'Tag', '|', 'Section results', 'Surface results', 'Solid results', 'Support reactions', 'Line results', '+Result windows', 'Result diagram', 'Result sections', '|']} />
        </Strip>
      </div>
    </header>
  );
}

/* ---------- project navigator ---------- */

function PanelTitle({ title }: { title: string }) {
  return (
    <div className="flex h-[19px] shrink-0 items-center bg-[#bac0cb] pr-px text-[12px] text-[#41454d]">
      <span className="flex-1">{title}</span>
      <button type="button" aria-label="Pin panel" className="flex w-4 justify-center">
        <svg width="9" height="9" viewBox="0 0 9 9"><path d="M2.500 5V.5H6.500V5M5.500 1V5M.5 5.500H8.500M4.500 6V9" fill="none" stroke="#6a6e77" /></svg>
      </button>
      <button type="button" aria-label="Close panel" className="flex w-4 justify-center">
        <svg width="9" height="9" viewBox="0 0 9 9"><path d="M1 1L8 8M8 1L1 8" fill="none" stroke="#6a6e77" strokeWidth="1.200" /></svg>
      </button>
    </div>
  );
}

const MARKS: Record<string, React.ReactNode> = {
  node: <Dot x={7.5} y={7} s={2.5} />,
  line: <g><path d="M4 10L11 4" stroke="#333" /><Dot x={4} y={10.500} s={2} /><Dot x={11} y={4} s={2} /></g>,
  material: <g><rect x="5" y="4" width="3" height="6" fill="#3b62c4" /><rect x="8" y="4" width="2" height="6" fill="#d23c8c" /><circle cx="5" cy="9" r="1.800" fill="#36a548" /></g>,
  surface: <path d="M4 8L8 4.500L12 6.500L8.500 9.500Z" fill="#5b8fcd" stroke="#284a78" strokeWidth=".7" />,
  ortho: <g><path d="M3.500 8L7 5L12 6L9 9.500Z" fill="#5b8fcd" stroke="#284a78" strokeWidth=".7" /><path d="M4 7L8 5L9 7Z" fill="#d0404c" /></g>,
  solid: <path d="M5 4H11V9L8 11L5 9ZM5 5L8 6L11 4M8 6V11" fill="#7fa7db" stroke="#1d3557" strokeWidth=".8" />,
  opening: <rect x="5" y="4.500" width="5.500" height="5.500" fill="#f2e488" stroke="#46699c" strokeWidth="1.600" />,
  support: <g><path d="M4 11Q7.500 4 11 11Z" fill="#2f9c3f" /><Dot x={7.500} y={5} s={2} /></g>,
  lsupport: <g><path d="M4 5.500H11" stroke="#333" /><path d="M3.500 10L5 6.500L7 10ZM8.500 10L10 6.500L12 10Z" fill="#2f9c3f" /><Dot x={4} y={5} s={2} /><Dot x={11} y={5} s={2} /></g>,
  ssupport: <g><path d="M4 5L11 4L12 8L6 9Z" fill="#5186c8" stroke="#1b3558" strokeWidth=".6" /><path d="M5 9L7 11L11 8L12 10L7 12Z" fill="#2f7c4f" /></g>,
  hinge: <path d="M4 8L7 6L8 8L11 7M8 9L12 8" stroke="#dfe5ee" strokeWidth="1.800" fill="none" />,
  cross: <g><path d="M6 4L12 3V9L6 11Z" fill="#5186d8" /><path d="M4 4H7M5.500 4V10M4 10H7" stroke="#c33" strokeWidth="1.200" /></g>,
  mhinge: <g><path d="M5 7L11 7" stroke="#777" strokeWidth="1.500" /><path d="M4 5V9L8 7Z" fill="#a83c18" /></g>,
  member: <g><path d="M4 10L11 4" stroke="#777" strokeWidth="2" /><Dot x={4} y={10.500} s={2} /><Dot x={11} y={4} s={2} /></g>,
  spring: <g><path d="M4 4.500H11V9H4Z" fill="#2f9c3f" /><path d="M6 5V9M9 5V9" stroke="#1b4c22" /><Dot x={3.500} y={4.500} s={2} /><Dot x={11.500} y={4.500} s={2} /></g>,
  nonlin: <path d="M7.500 3V11" stroke="#c3262c" strokeWidth="1.800" strokeDasharray="1.500 1" />,
  set: <g><path d="M4 11L9 4L11 10M5 8H11" stroke="#666" fill="none" /><Dot x={4} y={10} s={2} /><Dot x={9} y={4} s={2} /><Dot x={11} y={9} s={2} /></g>,
  inter: <g><path d="M4 7L8 4L11 7L8 10Z" fill="#6ea6e8" stroke="#1d3557" strokeWidth=".8" /><path d="M8 4V10" stroke="#1d3557" /></g>,
  mesh: <path d="M4 4H10V11H4ZM6 4V11M8 4V11M4 7H12V4" fill="#a8c0cc" stroke="#3d5668" strokeWidth=".8" />,
  srelease: <path d="M2 9L5 5L13 5L11 9ZM2 11L5 8L13 7L11 12Z" fill="#6a9bd4" stroke="#37648f" strokeWidth=".7" />,
  constraint: <g><path d="M4 4L11 10M11 4L4 10" stroke="#333" /><Dot x={4} y={4} s={2.500} /><Dot x={11} y={4} s={2.500} /><Dot x={4} y={10} s={2.500} /><Dot x={11} y={10} s={2.500} /></g>,
};

function TreeIcon({ icon }: { icon: string }) {
  if (icon === 'root') {
    return (
      <svg width="16" height="16" viewBox="0 0 16 16" fill="none">
        <path d="M4.500 .5H12L14.500 3V15.500H4.500Z" fill="#fff" stroke="#7b7f88" />
        <path d="M9 5H13M9 7.500H13M8 10H13M7 12.500H13" stroke="#888" />
        <path d="M0 6L5 2L10 5L9 8L6 12L3 10Z" fill="#5b83b8" stroke="#2b4870" strokeWidth=".8" />
        <path d="M2 6L8 5M5 2.500L7 10" stroke="#a9c2e2" strokeWidth=".8" />
      </svg>
    );
  }
  if (icon === 'lc') {
    return (
      <svg width="15" height="14" viewBox="0 0 18 18"><path d="M1 16.500H16" stroke="#222" strokeWidth="1.500" /><Down x={13} y={10} /></svg>
    );
  }
  if (icon === 'co' || icon === 'rc') {
    return <svg width="17" height="16" viewBox="0 0 18 18" className="-ml-0.5"><Comb c={icon === 'co' ? '#23a33a' : '#4a80e0'} /></svg>;
  }
  if (icon === 'open') {
    return (
      <svg width="16" height="13" viewBox="0 0 16 13">
        <path d="M2 12V2H6L7 3.500H14.500V12Z" fill="#a98a1c" stroke="#5c4e1c" />
        <path d="M2.500 12L0 4.500H11L14.500 12Z" fill="#dcbf34" stroke="#7d6718" strokeWidth=".7" />
      </svg>
    );
  }
  return (
    <svg width="15" height="13" viewBox="0 0 15 13" fill="none">
      <path d="M1 12V1.500H5L6 2.500H14V12Z" fill="#efd348" stroke="#a48b22" />
      <path d="M1.500 3.500H13.500" stroke="#fbf0a0" />
      <path d="M1 12.500H14.500V3" stroke="#5d5440" />
      {MARKS[icon]}
    </svg>
  );
}

type Row = [level: number, label: string, icon: string, box?: '+' | '-'];

const TREE: Row[] = [
  [0, 'Pneumatisches Dachtragwerk [1]', 'root', '-'],
  [1, 'Model Data', 'open', '-'],
  [2, 'Nodes', 'node', '+'],
  [2, 'Lines', 'line', '+'],
  [2, 'Materials', 'material', '+'],
  [2, 'Surfaces', 'surface', '+'],
  [2, 'Solids', 'solid', '+'],
  [2, 'Openings', 'opening'],
  [2, 'Nodal Supports', 'support', '+'],
  [2, 'Line Supports', 'lsupport', '+'],
  [2, 'Surface Supports', 'ssupport'],
  [2, 'Line Hinges', 'hinge'],
  [2, 'Variable Thicknesses', 'surface'],
  [2, 'Orthotropic Surfaces and Membranes', 'ortho'],
  [2, 'Cross-Sections', 'cross', '+'],
  [2, 'Member Hinges', 'mhinge', '+'],
  [2, 'Member Eccentricities', 'member'],
  [2, 'Member Divisions', 'line'],
  [2, 'Members', 'member', '+'],
  [2, 'Ribs', 'hinge'],
  [2, 'Member Elastic Foundations', 'spring'],
  [2, 'Member Nonlinearities', 'nonlin'],
  [2, 'Sets of Members', 'set'],
  [2, 'Intersections of Surfaces', 'inter'],
  [2, 'FE Mesh Refinements', 'mesh'],
  [2, 'Nodal Releases', 'folder'],
  [2, 'Line Release Types', 'folder'],
  [2, 'Line Releases', 'hinge'],
  [2, 'Surface Release Types', 'srelease'],
  [2, 'Surface Releases', 'srelease'],
  [2, 'Connection of Two Members', 'folder'],
  [2, 'Joints', 'folder'],
  [2, 'Nodal Constraints', 'constraint'],
  [1, 'Load Cases and Combinations', 'open', '-'],
  [2, 'Load Cases', 'lc', '+'],
  [2, 'Load Combinations', 'co', '+'],
  [2, 'Result Combinations', 'rc', '+'],
  [1, 'Loads', 'folder', '+'],
  [1, 'Results', 'folder'],
  [1, 'Sections', 'folder'],
];

const GUIDE = '[background:repeating-linear-gradient(180deg,#8a8a8a_0_1px,transparent_1px_2px)_9px_0/1px_100%_no-repeat]';
const BRANCH =
  '[background:repeating-linear-gradient(180deg,#8a8a8a_0_1px,transparent_1px_2px)_9px_0/1px_100%_no-repeat,repeating-linear-gradient(90deg,#8a8a8a_0_1px,transparent_1px_2px)_9px_9px/10px_1px_no-repeat]';
const BRANCH_END =
  '[background:repeating-linear-gradient(180deg,#8a8a8a_0_1px,transparent_1px_2px)_9px_0/1px_10px_no-repeat,repeating-linear-gradient(90deg,#8a8a8a_0_1px,transparent_1px_2px)_9px_9px/10px_1px_no-repeat]';

function TreeRow({ row, last }: { row: Row; last: boolean }) {
  const [level, label, icon, box] = row;
  return (
    <li className="flex h-[18px] items-center whitespace-nowrap">
      {level > 0 && <span className="h-full w-[19px] shrink-0" />}
      {level > 1 && <span className={'h-full w-[19px] shrink-0 ' + GUIDE} />}
      <span className={'flex h-full w-[19px] shrink-0 items-center justify-center ' + (last ? BRANCH_END : BRANCH)}>
        {box && (
          <button type="button" aria-label={'Toggle ' + label} className="rounded-[1px] border border-[#919191] bg-white">
            <svg width="7" height="7" viewBox="0 0 7 7" className="block">
              <path d={box === '+' ? 'M1 3.500H6M3.500 1V6' : 'M1 3.500H6'} stroke="#34539c" />
            </svg>
          </button>
        )}
      </span>
      <span className="flex w-[22px] shrink-0 items-center pl-0.5">
        <TreeIcon icon={icon} />
      </span>
      <span className={level === 0 ? 'font-bold' : ''}>{label}</span>
    </li>
  );
}

function Navigator() {
  return (
    <aside className="flex w-[286px] shrink-0 flex-col pr-[5px]">
      <div className="flex min-h-0 flex-1 flex-col border-r border-b border-[#8f93a0] bg-[#e6e9f2] pr-0.5">
        <PanelTitle title="Project Navigator - Data" />
        <div className="mt-0.5 flex min-h-0 flex-1 border-t border-[#9a9da5] bg-[#f0f0f0]">
          <div className="flex min-w-0 flex-1 flex-col">
            <ul className="min-h-0 flex-1 overflow-hidden bg-[#fcfcf4] pt-px pl-0.5 text-[12px] leading-[18px] text-black">
              {TREE.map((row, i) => (
                <TreeRow key={i} row={row} last={row[0] === 2 && TREE[i + 1][0] < 2} />
              ))}
            </ul>
            <div className="h-[17px] shrink-0 pt-2 pl-[17px]">
              <div className="h-0.5 w-[93px] bg-[#868686]" />
            </div>
          </div>
          <div className="w-[17px] pt-10 pl-[7px]">
            <div className="h-[223px] w-0.5 bg-[#868686]" />
          </div>
        </div>
      </div>
      <div className="flex h-6 shrink-0 items-center text-[12px] text-[#4c5058]">
        <button type="button" className="flex h-5 items-center gap-px rounded-b-xs bg-[#eef2f7] px-0.5 shadow-[1px_1px_0_#9fd7de]">
          <svg width="17" height="17" viewBox="0 0 18 18">
            <path d="M1 14V4H5L6 5H10V14Z" fill="#f0cf3c" stroke="#8a7018" />
            <rect x="7" y="1" width="11" height="8" fill="#fff" stroke="#3a62c4" />
            <path d="M7 2.500H18" stroke="#3a62c4" strokeWidth="2" />
            <Lens x={10} y={9} r={3.500} />
          </svg>
          Data
        </button>
        <button type="button" className="ml-2 flex h-5 items-center gap-0.5">
          <svg width="17" height="17" viewBox="0 0 18 18">
            <rect x="2" y="5.500" width="13" height="11" fill="#fff" stroke="#2c4ca8" strokeWidth="1.500" />
            <path d="M4 9.500H7M9 9.500H13M4 13H7M9 13H13" stroke="#2c4ca8" />
            <Hand />
          </svg>
          Display
        </button>
        <button type="button" className="ml-3 flex h-5 items-center gap-0.5">
          <svg width="15" height="16" viewBox="0 0 16 17">
            <path d="M1 15H15L10 12Z" fill="#22408c" stroke="#22408c" />
            <path d="M4 12L9 2L13 4L9 12Z" fill="#7f9fe0" stroke="#22408c" strokeWidth="1.300" />
            <path d="M11 8Q14 10 11 14" fill="none" stroke="#22408c" strokeWidth="1.500" />
          </svg>
          Views
        </button>
      </div>
    </aside>
  );
}

/* ---------- 3D model ---------- */

// one air cushion per grid cell, listed from the far row to the near row
const CUSHIONS: { x: number; y: number }[] = [];
for (let j = 3; j >= 0; j--) {
  for (let i = 0; i < 4; i++) {
    CUSHIONS.push({ x: 511 + i * 78 + j * 75, y: 248 + i * 12 - j * 12.4 });
  }
}

// tent poles: two ridges with five poles each
const POLES = [0, 1, 2, 3, 4].flatMap((k) => [
  { x: 512 + k * 75.5, y: 229 - k * 12.2 },
  { x: 668 + k * 75.5, y: 253 - k * 12.4 },
]);

// green support pads along the two wall feet
const PADS = [0, 1, 2, 3, 4, 5].flatMap((k) => [
  { x: 450 + k * 52, y: 552 + k * 7.9 },
  { x: 752 + k * 52, y: 504 + k * 7.8 },
]);

function Bay({ dx, dy }: { dx: number; dy: number }) {
  return (
    <g transform={`translate(${dx} ${dy})`} stroke={NAVY} fill="none">
      <path d="M437 333Q470 297 514 269" strokeWidth="5" />
      <path d="M484 294L510 266" strokeWidth="2" />
      <path d="M476 266L512 345" strokeWidth="2" />
      <path d="M518 269L589 357" strokeWidth="3" />
      <path d="M434 248L475 266" strokeWidth="2" />
      <path d="M475 266L530 257" strokeWidth="1.600" />
      <path d="M475 267L530 269L591 271" strokeWidth="1.600" />
      <path d="M480 265L506 259L531 256L516 262Z" fill={NAVY} strokeWidth="1" />
      <path d="M500 270L512 264L524 269Z" fill={NAVY} strokeWidth="1" />
      <path d="M512 262V346" strokeWidth="4" />
      <path d="M591 272V358" strokeWidth="5" />
      <path d="M512 230L475 266" strokeWidth=".7" />
    </g>
  );
}

function Model() {
  return (
    <svg viewBox="287 104 913 567" className="h-full w-full" fill="none" role="img" aria-label="Pneumatisches Dachtragwerk">
      <defs>
        <linearGradient id="cushion" x1="0" y1="0" x2="0" y2="1">
          <stop offset="0" stopColor="#2f68a4" />
          <stop offset=".5" stopColor="#3b76bd" />
          <stop offset="1" stopColor="#3b77bf" />
        </linearGradient>
      </defs>

      {/* walls */}
      <path d="M432 335L737 290V382H749Z" fill="#8b8b8b" />
      <path d="M434 334L700 296" stroke="#727272" strokeWidth="2" />
      <path d="M737 286H749V384L737 382Z" fill="#8e8e8e" />
      {PADS.map((p) => (
        <g key={p.x} transform={`translate(${p.x} ${p.y})`}>
          <path d="M0-1H16V3L10 5L0 4Z" fill="#3fe83f" />
          <path d="M7 4L13 2L20 4L12 6H4Z" fill="#7ff07c" />
        </g>
      ))}
      <path d="M749 287L1052 333V547L1044 548L749 504Z" fill="#949494" />
      <path d="M1044 331L1052 333V547L1044 548Z" fill="#8a8a8a" />
      <path d="M790 293L1050 333" stroke="#6e6e6e" strokeWidth="2" />
      <path d="M430 334L750 382V597L743 597L430 550Z" fill="#8c8c8c" />
      <path d="M430 334L750 382" stroke="#747474" strokeWidth="2" />
      <path d="M743 381L750 382V597H743Z" fill="#878787" />

      {/* far side frame */}
      <g stroke={NAVY}>
        <path d="M815 285V297" strokeWidth="4" />
        <path d="M892 270V308M971 258V321" strokeWidth="5" />
        <path d="M850 284L891 308" strokeWidth="4" />
        <path d="M868 280L892 308L934 270" strokeWidth="2" />
        <path d="M972 320L993 266L1048 332" strokeWidth="2.500" />
        <path d="M785 202L852 205L884 219M940 226L1008 229L1047 246" strokeWidth="2" />
        <path d="M835 207L854 203L850 210ZM992 231L1010 228L1006 234Z" fill={NAVY} />
      </g>

      {/* cushions: bright underside, then shaded top */}
      {CUSHIONS.map((c) => (
        <g key={c.x + ',' + c.y} transform={`translate(${c.x} ${c.y})`}>
          <path d="M-70 0C-45 22 45 22 70 0Z" fill="#4a9bf8" />
          <path d="M-77 0C-52-6-38-16-6-16C30-17 52-7 77 0L0 12Z" fill="url(#cushion)" />
        </g>
      ))}
      <path d="M693 284H800L747 296Z" fill="#3b77bf" />

      {/* wires and poles */}
      <g stroke={NAVY} strokeWidth=".8">
        <path d="M434 247L512 229L587 216L662 205L739 192L814 180L884 218" />
        <path d="M591 271L668 253L744 240L819 228L895 215L970 203L1048 245" />
        <path d="M512 229L591 271M587 216L666 259M662 205L741 244M739 192L810 231M814 180L852 205" />
        <path d="M668 253L747 296M744 240L822 283M819 228L897 271M895 215L972 259M970 203L1008 229" />
        <path d="M434 247L587 216M512 229L662 205M662 205L814 180M755 196L814 180M910 219L970 203" strokeDasharray="5 2" strokeWidth=".6" />
      </g>
      {POLES.map((p) => (
        <path key={p.x} d={`M${p.x} ${p.y}V${p.y + 26}`} stroke={NAVY} strokeWidth="2" />
      ))}
      <path d="M512 230V265M668 254V290" stroke={NAVY} strokeWidth="2" />

      {/* near side frame */}
      <Bay dx={0} dy={0} />
      <Bay dx={156} dy={24} />
      <g stroke={NAVY}>
        <path d="M434 247V334M1049 246V332" strokeWidth="5" />
        <path d="M747 296V381" strokeWidth="5" />
        <path d="M434 248L591 272L747 297" strokeWidth="2" />
        <path d="M744 297L1049 247" strokeWidth="4.500" strokeLinecap="round" />
        <path d="M822 285V318M897 273V292M973 260V298" strokeWidth="2" />
        <path d="M749 380C792 333 850 292 925 291C975 291 1015 306 1048 332" strokeWidth="5" />
      </g>
      <path d="M430 334H437M590 358H594M744 382H752M1047 333H1054" stroke="#2ec23a" strokeWidth="2" />

      {/* axis cross */}
      <path d="M342 559V524" stroke="#00ffff" strokeWidth="2" />
      <path d="M339 528L342 518L345 528Z" fill="#0e7e80" />
      <path d="M342 559L364 555" stroke="#00f000" strokeWidth="2" />
      <path d="M362 552L371 554L362 558Z" fill="#0b6b12" />
      <path d="M342 559L364 563" stroke="#f00" strokeWidth="2" />
      <path d="M363 559L372 563L362 566Z" fill="#7c0b0b" />
      <g fontSize="10" fontFamily="Liberation Sans, sans-serif">
        <text x="339" y="514" fill="#00ffff">Z</text>
        <text x="374" y="557" fill="#00f000">Y</text>
        <text x="375" y="568" fill="#f00">X</text>
      </g>
    </svg>
  );
}

/* ---------- node table ---------- */

const NODES = [
  ['0.000', '0.000', '0.000', ''],
  ['0.000', '10.000', '0.000', ''],
  ['0.000', '5.000', '0.000', ''],
  ['0.000', '0.000', '-2.000', 'Supported'],
];

const SHEETS = ['Nodes', 'Lines', 'Materials', 'Surfaces', 'Solids', 'Openings', 'Nodal Supports', 'Line Supports', 'Surface Supports', 'Line Hinges', 'Cross-Sections', 'Member Hinges'];

const LETTER = 'h-3.5 border-r border-b border-[#6f6f6f] leading-3 font-normal';
const HEAD = 'h-[17px] align-top font-normal';
const CELL = 'h-4 border-r border-b border-[#a0a0a0] bg-white';

function NodeTable() {
  return (
    <table className="w-full table-fixed border-separate border-spacing-0 border-t border-l border-[#6f6f6f] text-[11px] leading-[15px] text-black">
      <colgroup>
        <col className="w-[45px]" />
        <col className="w-[84px]" />
        <col className="w-[72px]" />
        <col className="w-[90px]" />
        <col className="w-[78px]" />
        <col className="w-[78px]" />
        <col className="w-[78px]" />
        <col />
      </colgroup>
      <thead>
        <tr>
          <th rowSpan={3} className="border-r border-b border-[#6f6f6f] bg-[#e1e1e1] pt-1 leading-[13px] font-normal">
            Node<br />No.
          </th>
          {'ABCDEFG'.split('').map((c) => (
            <th key={c} className={LETTER + (c === 'A' ? ' bg-[#0078d7] text-white' : ' bg-[#e1e1e1]')}>
              {c}
            </th>
          ))}
        </tr>
        <tr>
          <th className={HEAD + ' border-r border-[#a0a0a0]'} />
          <th className={HEAD + ' border-r border-[#a0a0a0]'}>Reference</th>
          <th className={HEAD + ' border-r border-[#a0a0a0]'}>Coordinate</th>
          <th colSpan={3} className={HEAD + ' border-r border-[#a0a0a0]'}>Node Coordinates</th>
          <th className={HEAD + ' border-r border-[#a0a0a0]'} />
        </tr>
        <tr>
          {['Node Type', 'Node', 'System', 'X [m]', 'Y [m]', 'Z [m]', 'Comment'].map((h) => (
            <th key={h} className={HEAD + ' border-r border-b border-[#a0a0a0]'}>{h}</th>
          ))}
        </tr>
      </thead>
      <tbody>
        {NODES.map((n, i) => (
          <tr key={i}>
            <th className={'h-4 border-r border-b border-[#6f6f6f] font-normal ' + (i === 0 ? 'bg-[#0078d7] text-white' : 'bg-[#e1e1e1]')}>{i + 1}</th>
            <td className={CELL + ' pl-1' + (i === 0 ? ' outline-1 -outline-offset-2 outline-black outline-dotted' : '')}>Standard</td>
            <td className={CELL + ' text-center'}>0</td>
            <td className={CELL + ' pl-1'}><span className="underline">C</span>artesian</td>
            <td className={CELL + ' pr-1 text-right'}>{n[0]}</td>
            <td className={CELL + ' pr-1 text-right'}>{n[1]}</td>
            <td className={CELL + ' pr-1 text-right'}>{n[2]}</td>
            <td className={CELL + ' pl-1'}>{n[3]}</td>
          </tr>
        ))}
      </tbody>
    </table>
  );
}

function TablePanel() {
  return (
    <section className="flex h-[204px] shrink-0 flex-col bg-[#f0f0f0]">
      <div className="flex flex-col bg-[#bac0cb] pl-[3px]">
        <PanelTitle title="1.1 Nodes" />
      </div>
      <div className="flex h-[27px] shrink-0 items-center border-b border-[#6b6e76] bg-gradient-to-b from-[#e2e8f1] to-[#d3d9e4] pl-2">
        <Tools items={['*Edit graphic', 'Insert row', 'Move down', 'Table diagram', 'Table curve', '|', 'Table left', 'Table right', '|', '*Sync selection', '*Sync view', 'Refresh', '|', 'Add row', 'Multiply row', 'Divide row', '|', 'Clear table', '|', 'Delete row', 'Row left', 'Row right', '|', 'Table header', 'Table rows', '|', 'Table info', '|', 'Properties', 'Glasses', 'Excel', 'Calculator', '|', 'Variables', 'Formula', 'Delete formula', '|', 'Lock']} />
      </div>
      <div className="flex border-l border-[#6b6e76] pt-0.5 pl-px font-['Liberation_Sans',Arial,sans-serif]">
        <div className="min-w-0 flex-1">
          <NodeTable />
        </div>
        <div className="w-5 border-r border-[#9a9a9a] pt-4 pl-2">
          <div className="h-[17px] w-0.5 bg-[#868686]" />
        </div>
      </div>
      <div className="mt-2 flex border-b border-[#d5d5d5] font-['Liberation_Sans',Arial,sans-serif] text-[11px] leading-[15px] text-black">
        {SHEETS.map((s, i) => (
          <button
            key={s}
            type="button"
            className={
              'h-[17px] rounded-b-[3px] border-r border-b border-[#6f6f6f] whitespace-nowrap ' +
              (i === 0 ? 'bg-[#f0f0f0] pr-1 pl-[3px]' : 'border-t border-l border-l-white bg-[#e4e4e4] pr-[3px] pl-[2px]')
            }
          >
            {s}
          </button>
        ))}
        <div className="flex flex-1 justify-end border-t border-[#6f6f6f]">
          {[
            ['First', 'M1.500 0V7M7 0L3 3.500L7 7Z', '#a0a0a0'],
            ['Back', 'M6 0L2 3.500L6 7Z', '#a0a0a0'],
            ['Forward', 'M2 0L6 3.500L2 7Z', '#000'],
            ['Last', 'M1 0L5 3.500L1 7ZM6.500 0V7', '#000'],
          ].map(([name, d, c]) => (
            <button key={name} type="button" aria-label={name} className="flex h-[15px] w-4 items-center justify-center border-r border-b border-l border-r-[#6f6f6f] border-b-[#6f6f6f] border-l-white">
              <svg width="8" height="7" viewBox="0 0 8 7"><path d={d} fill={c} stroke={c} /></svg>
            </button>
          ))}
        </div>
      </div>
    </section>
  );
}

/* ---------- status bar ---------- */

function StatusBar() {
  const modes: [string, boolean, string][] = [
    ['SNAP', true, 'w-[35px]'],
    ['GRID', false, 'w-[35px]'],
    ['ORTHO', true, 'w-[50px]'],
    ['OSNAP', true, 'w-[44px]'],
    ['GLINES', false, 'w-[45px]'],
    ['DXF', true, 'w-[29px]'],
  ];
  return (
    <footer className="flex h-5 shrink-0 border-t border-[#9c9fa8] bg-gradient-to-b from-[#d9dce6] via-[#a9adb7] to-[#b4b8c2] pt-px text-[12px] leading-[17px] text-[#33363c]">
      <div className="w-[438px] shrink-0" />
      {modes.map(([label, on, w]) => (
        <button
          key={label}
          type="button"
          aria-pressed={on}
          className={'mr-[2px] flex shrink-0 justify-center border-t border-l ' + w + (on ? ' border-black border-r border-r-white' : ' border-white border-r border-r-[#8f939c]')}
        >
          {label}
        </button>
      ))}
      <div className="flex-1" />
      <div className="w-[88px] border-l border-[#8f939c]" />
      <div className="w-[74px] border-l border-[#8f939c]" />
      <div className="w-[74px] border-l border-[#8f939c]" />
      <div className="flex w-[90px] items-end justify-end border-l border-[#8f939c]">
        <svg width="12" height="12" viewBox="0 0 12 12"><path d="M9 1H11V3H9ZM5 5H7V7H5ZM9 5H11V7H9ZM1 9H3V11H1ZM5 9H7V11H5ZM9 9H11V11H9Z" fill="#74777f" /></svg>
      </div>
    </footer>
  );
}

export default function App() {
  return (
    <div className="flex h-screen flex-col overflow-hidden bg-[#d0d3dc] font-['Roboto','Open_Sans',sans-serif]">
      <Chrome />
      <main className="flex min-h-0 flex-1 pt-px">
        <Navigator />
        <div className="flex min-w-0 flex-1 flex-col">
          <div className="mb-[5px] min-h-0 flex-1 border-t border-l border-[#6b6e76] bg-white">
            <Model />
          </div>
          <TablePanel />
        </div>
      </main>
      <StatusBar />
    </div>
  );
}
